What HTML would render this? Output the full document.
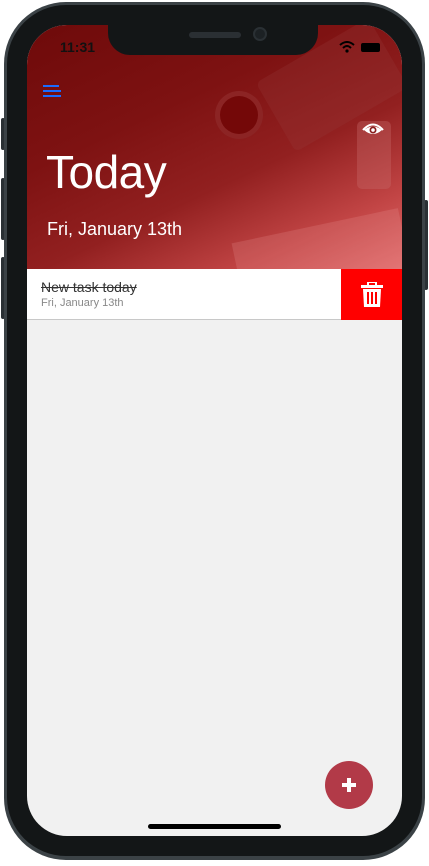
<!DOCTYPE html>
<html><head><meta charset="utf-8"><style>
*{margin:0;padding:0;box-sizing:border-box}
body{width:429px;height:866px;background:#fff;position:relative;overflow:hidden;font-family:"Liberation Sans",sans-serif}
.btn{position:absolute;background:#2a3034;border-radius:2px}
.frame{position:absolute;left:4px;top:2px;width:421px;height:858px;border-radius:62px;background:#3b4246;}
.frame2{position:absolute;left:7px;top:5px;width:415px;height:851px;border-radius:59px;background:#131617;}
.screen{position:absolute;left:27px;top:25px;width:375px;height:811px;border-radius:40px;overflow:hidden;background:#f1f1f1}
.hdr{position:absolute;left:0;top:0;width:375px;height:244px;background:linear-gradient(155deg,#6e0a0a 0%,#7e1212 35%,#922020 60%,#c24545 82%,#e06a6a 100%)}
.notch{position:absolute;left:81px;top:0;width:210px;height:30px;background:#131617;border-radius:0 0 22px 22px}
.row{position:absolute;left:0;top:244px;width:314px;height:51px;background:#fff;border-bottom:1px solid #c8c8c8}
.del{position:absolute;left:314px;top:244px;width:61px;height:51px;background:#ff0000}
</style></head><body>
<div class="btn" style="left:1px;top:118px;width:4px;height:32px"></div>
<div class="btn" style="left:1px;top:178px;width:4px;height:62px"></div>
<div class="btn" style="left:1px;top:257px;width:4px;height:62px"></div>
<div class="btn" style="left:424px;top:200px;width:4px;height:90px"></div>
<div class="frame"></div><div class="frame2"></div>
<div class="screen">
 <div class="hdr">
  <div style="position:absolute;left:188px;top:66px;width:48px;height:48px;border-radius:50%;background:#740808;border:5px solid rgba(170,70,70,.45)"></div>
  <div style="position:absolute;left:240px;top:20px;width:130px;height:80px;background:rgba(150,60,60,.25);transform:rotate(-30deg);border-radius:6px"></div>
  <div style="position:absolute;left:330px;top:96px;width:34px;height:68px;border-radius:5px;background:rgba(200,110,110,.35)"></div>
  <div style="position:absolute;left:210px;top:200px;width:170px;height:70px;background:rgba(240,160,160,.2);transform:rotate(-12deg)"></div>
 </div>
 <div class="notch"></div>
 <div style="position:absolute;left:162px;top:7px;width:52px;height:6px;border-radius:3px;background:#2a2f33"></div>
 <div style="position:absolute;left:226px;top:2px;width:14px;height:14px;border-radius:50%;background:#1c2124;border:2px solid #2a3034"></div>
 <div style="position:absolute;left:33px;top:14px;font-weight:bold;font-size:14px;color:#111">11:31</div>
 <svg style="position:absolute;left:312px;top:16px" width="16" height="12" viewBox="0 0 16 12"><path d="M1 4 Q8 -2 15 4" stroke="#000" stroke-width="2" fill="none"/><path d="M4 7 Q8 3 12 7" stroke="#000" stroke-width="2" fill="none"/><circle cx="8" cy="10" r="1.6"/></svg>
 <div style="position:absolute;left:334px;top:18px;width:19px;height:9px;background:#000;border-radius:2px"></div>
 <div style="position:absolute;left:16px;top:60px;width:16px;height:2px;background:#1a6bff"></div>
 <div style="position:absolute;left:16px;top:65px;width:18px;height:2px;background:#1a6bff"></div>
 <div style="position:absolute;left:16px;top:70px;width:18px;height:2px;background:#1a6bff"></div>
 <svg style="position:absolute;left:335px;top:97px" width="22" height="15" viewBox="0 0 22 15"><path d="M1 8 Q11 -3 21 8" stroke="#fff" stroke-width="2" fill="none"/><path d="M2 8 Q11 16 20 8 Q11 1 2 8Z" fill="#fff"/><circle cx="11" cy="8" r="3.5" fill="#8a1e1e"/><circle cx="11" cy="8" r="1.8" fill="#fff"/></svg>
 <div style="position:absolute;left:19px;top:120px;font-size:46px;font-weight:300;color:#fff;letter-spacing:-0.5px">Today</div>
 <div style="position:absolute;left:20px;top:194px;font-size:18px;color:#fff;font-weight:300">Fri, January 13th</div>
 <div class="row">
  <div style="position:absolute;left:14px;top:10px;font-size:14px;color:#333;text-decoration:line-through">New task today</div>
  <div style="position:absolute;left:14px;top:28px;font-size:11px;color:#888">Fri, January 13th</div>
 </div>
 <div class="del"><svg style="position:absolute;left:20px;top:13px" width="22" height="25" viewBox="0 0 22 25"><rect x="0" y="3" width="22" height="3" fill="#fff"/><rect x="7" y="0" width="8" height="4" fill="none" stroke="#fff" stroke-width="2"/><path d="M2 7 H20 L19 25 H3Z" fill="#fff"/><rect x="6" y="10" width="2" height="12" fill="#f00"/><rect x="10" y="10" width="2" height="12" fill="#f00"/><rect x="14" y="10" width="2" height="12" fill="#f00"/></svg></div>
 <div style="position:absolute;left:298px;top:736px;width:48px;height:48px;border-radius:50%;background:#b23a48"></div>
 <div style="position:absolute;left:315px;top:758px;width:14px;height:4px;background:#fff"></div>
 <div style="position:absolute;left:320px;top:753px;width:4px;height:14px;background:#fff"></div>
 <div style="position:absolute;left:121px;top:799px;width:133px;height:5px;border-radius:3px;background:#000"></div>
</div>
</body></html>
